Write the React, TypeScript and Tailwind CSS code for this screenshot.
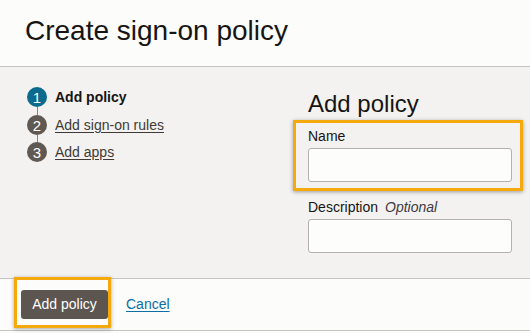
import React from "react";

const font = { fontFamily: '"Liberation Sans", Arial, sans-serif' };

function Step({ n, label, active }: { n: number; label: string; active?: boolean }) {
  return (
    <div className="flex h-5 items-center">
      <div
        className={`flex h-5 w-5 items-center justify-center rounded-full text-[15px] leading-none text-white ${
          active ? "bg-[#0b6a8e]" : "bg-[#5f5853]"
        }`}
      >
        {n}
      </div>
      {active ? (
        <span className="ml-2 text-[14px] font-bold leading-5 text-[#161513]">{label}</span>
      ) : (
        <a className="ml-2 text-[14px] leading-5 text-[#3f3a36] underline underline-offset-[2px]" href="#">
          {label}
        </a>
      )}
    </div>
  );
}

export default function App() {
  return (
    <div className="flex h-[333px] w-[530px] flex-col bg-[#fcfcfb]" style={font}>
      {/* Header */}
      <div className="h-[67px] shrink-0 border-b border-[#c6c4c2] px-[25px] pt-[17px]">
        <h1 className="text-[28px] leading-[28px] text-[#161513]">Create sign-on policy</h1>
      </div>

      {/* Main */}
      <div className="flex h-[211px] shrink-0 bg-[#f3f2f0]">
        <div className="flex flex-col pl-[27px] pt-[20px]">
          <Step n={1} label="Add policy" active />
          <div className="ml-[9.5px] h-[8px] w-px bg-[#8a8480]" />
          <Step n={2} label="Add sign-on rules" />
          <div className="ml-[9.5px] h-[7px] w-px bg-[#8a8480]" />
          <Step n={3} label="Add apps" />
        </div>

        <div className="ml-auto mr-[18px] flex w-[204px] flex-col pt-[25px]">
          <h2 className="text-[24px] leading-[24px] text-[#161513]">Add policy</h2>

          <div className="relative mt-[13px]">
            <div className="pointer-events-none absolute -bottom-[9px] -left-[15px] -right-[11px] -top-[9px] border-[3px] border-[#f6a90c] shadow-[0_1px_4px_rgba(0,0,0,0.35)]" />
            <label className="block text-[14px] leading-[14px] text-[#161513]">Name</label>
            <input
              className="mt-[5px] block h-[34px] w-[204px] rounded-[3px] border border-[#b3b0ad] bg-[#fdfdfc] outline-none"
              type="text"
            />
          </div>

          <div className="mt-[18px]">
            <label className="block text-[14px] leading-[14px] text-[#161513]">
              Description<span className="ml-[7px] italic text-[#3e3a45]">Optional</span>
            </label>
            <input
              className="mt-[5px] block h-[34px] w-[204px] rounded-[3px] border border-[#b3b0ad] bg-[#fdfdfc] outline-none"
              type="text"
            />
          </div>
        </div>
      </div>

      {/* Footer */}
      <div className="flex h-[53px] shrink-0 items-start border-y border-[#c6c4c2] pl-[21px] pt-[11px]">
        <div className="relative">
          <div className="pointer-events-none absolute -bottom-[9px] -left-[7px] -right-[3px] -top-[13px] border-[3px] border-[#f6a90c] shadow-[0_1px_4px_rgba(0,0,0,0.35)]" />
          <button className="flex h-[29px] w-[87px] items-center justify-center rounded-[3px] bg-[#5d5550] text-[14px] text-white">
            Add policy
          </button>
        </div>
        <a className="ml-[18px] mt-[6px] text-[14px] leading-[16px] text-[#0b6ea6] underline underline-offset-[2px]" href="#">
          Cancel
        </a>
      </div>
    </div>
  );
}
